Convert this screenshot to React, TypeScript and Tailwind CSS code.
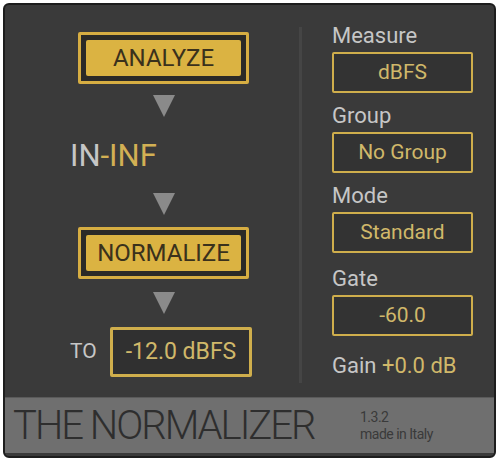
const font = { fontFamily: 'Roboto, "Open Sans", sans-serif' };

function Arrow({ className }: { className: string }) {
  return (
    <svg width="22" height="22" viewBox="0 0 22 22" className={className}>
      <polygon points="0,0 22,0 11,22" fill="#8a8a8a" />
    </svg>
  );
}

function BigButton({ label, className }: { label: string; className: string }) {
  return (
    <div className={`w-[171px] h-[52px] border-[3px] border-[#d6ad42] rounded-[2px] bg-[#2b2a27] p-[5px] ${className}`}>
      <div className="w-full h-full bg-[#dbb342] rounded-[2px] flex items-center justify-center text-[24px] leading-none text-[#3a311c]">
        {label}
      </div>
    </div>
  );
}

function Field({ label, value, className }: { label: string; value: string; className: string }) {
  return (
    <div className={className}>
      <div className="text-[22px] leading-[26px] text-[#c6c6c6]">{label}</div>
      <div className="mt-[3px] w-[141px] h-[41px] border-2 border-[#cfae4c] rounded-[2px] bg-[#333333] flex items-center justify-center text-[21px] text-[#d0b86a]">
        {value}
      </div>
    </div>
  );
}

export default function App() {
  return (
    <div className="w-[500px] h-[460px] bg-white pt-[3px] pl-[3px]" style={font}>
      <div className="w-[493px] h-[455px] rounded-[6px] border-2 border-[#1d1d1d] bg-[#3a3a3a] flex flex-col overflow-hidden">
        <div className="h-[392px] flex">
          <div className="w-[294px] flex flex-col">
            <BigButton label="ANALYZE" className="mt-[27px] ml-[73px]" />
            <Arrow className="mt-[11px] ml-[148px]" />
            <div className="mt-[23px] ml-[65px] text-[31px] leading-[31px]">
              <span className="text-[#c6c6c6]">IN</span>
              <span className="text-[#d2b054]">-INF</span>
            </div>
            <Arrow className="mt-[22px] ml-[148px]" />
            <BigButton label="NORMALIZE" className="mt-[12px] ml-[73px]" />
            <Arrow className="mt-[13px] ml-[148px]" />
            <div className="mt-[13px] ml-[65px] flex items-center">
              <span className="w-[40px] text-[21px] text-[#c6c6c6]">TO</span>
              <div className="w-[142px] h-[50px] border-[3px] border-[#cfae4c] rounded-[2px] bg-[#303030] flex items-center justify-center text-[23px] text-[#d0b86a]">
                -12.0 dBFS
              </div>
            </div>
          </div>
          <div className="w-[3px] mt-[22px] mb-[14px] bg-[#454545]" />
          <div className="flex flex-col pl-[30px]">
            <Field label="Measure" value="dBFS" className="mt-[18px]" />
            <Field label="Group" value="No Group" className="mt-[10px]" />
            <Field label="Mode" value="Standard" className="mt-[10px]" />
            <Field label="Gate" value="-60.0" className="mt-[13px]" />
            <div className="mt-[17px] text-[22px] leading-[26px]">
              <span className="text-[#c6c6c6]">Gain </span>
              <span className="text-[#d0b86a]">+0.0 dB</span>
            </div>
          </div>
        </div>
        <div className="h-[56px] bg-[#6f6f6f] border-t border-[#5a5a5a] flex items-center pl-[8px]">
          <div className="text-[40px] leading-[40px] font-light tracking-[-2px] text-[#2e2e2e] w-[347px]">
            THE NORMALIZER
          </div>
          <div className="text-[14px] leading-[17px] text-[#3a3a3a] tracking-[-0.5px]">
            <div>1.3.2</div>
            <div>made in Italy</div>
          </div>
        </div>
      </div>
    </div>
  );
}
